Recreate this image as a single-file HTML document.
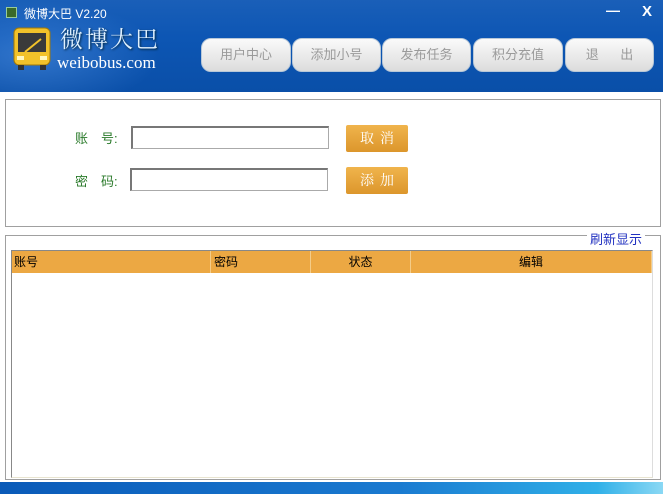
<!DOCTYPE html>
<html><head><meta charset="utf-8"><style>
*{margin:0;padding:0;box-sizing:border-box}
body{width:663px;height:494px;overflow:hidden;background:#fff;font-family:"Liberation Sans","Noto Sans CJK SC","WenQuanYi Zen Hei",sans-serif;position:relative}
.hdr{position:absolute;left:0;top:0;width:663px;height:92px;background:linear-gradient(180deg,#1a5fb8 0%,#0d56b4 40%,#0a4fa8 100%)}
.hdr:before{content:"";position:absolute;left:0;top:0;width:160px;height:92px;background:radial-gradient(ellipse at 20% 60%,rgba(120,180,255,.35),transparent 70%)}
.title{position:absolute;left:24px;top:5px;color:#fff;font-size:12px}
.ico{position:absolute;left:6px;top:7px;width:11px;height:11px;background:#3a6a2a;border:1px solid #9c9}
.logo{position:absolute;left:60px;top:23px;color:#dff0ff;font-family:"Noto Serif CJK SC",serif;font-size:23px;line-height:30px;letter-spacing:2px;text-shadow:1px 1px 2px #023}
.url{position:absolute;left:57px;top:53px;color:#fff;font-family:"Liberation Serif",serif;font-size:17px;line-height:20px}
.btn{position:absolute;top:38px;height:34px;border-radius:10px;background:linear-gradient(#fafafa,#dcdcdc);border:1px solid #b8c8d8;color:#9a9a9a;font-size:13px;text-align:center;line-height:32px}
.minx{position:absolute;top:0;color:#fff;font-weight:bold;font-size:14px}
.panel{position:absolute;left:5px;top:99px;width:656px;height:128px;border:1px solid #a0a0a0}
.lbl{position:absolute;color:#2a7a2a;font-size:13px}
.inp{position:absolute;width:198px;height:23px;border:1px solid #aaa;border-top:2px solid #777;border-left:2px solid #777;background:#fff}
.ob{position:absolute;width:62px;height:27px;background:linear-gradient(#f0b44c,#dc962c);border-radius:2px;color:#fff;font-family:"Noto Serif CJK SC",serif;font-size:14px;text-align:center;line-height:27px;letter-spacing:6px;padding-left:6px}
.grp{position:absolute;left:5px;top:235px;width:656px;height:245px;border:1px solid #a0a0a0}
.gl{position:absolute;left:587px;top:229px;background:#fff;color:#2030c0;font-size:13px;padding:0 3px}
.tbl{position:absolute;left:11px;top:250px;width:642px;height:228px;border:1px solid #888;border-right:1px solid #ddd;border-bottom:1px solid #e8e4d0}
.th{position:absolute;top:0;height:22px;background:#eca843;border-right:1px solid #f4cc88;font-size:12px;line-height:22px;color:#000}
.foot{position:absolute;left:0;top:482px;width:663px;height:12px;background:linear-gradient(90deg,#0a5ab8,#1a7ad0 60%,#30b0e8 90%,#8ad8f4)}
</style></head><body>
<div class="hdr">
<div class="ico"></div>
<div class="title">微博大巴 V2.20</div>
<svg style="position:absolute;left:13px;top:27px" width="38" height="44" viewBox="0 0 38 44"><rect x="1" y="1" width="36" height="37" rx="5" fill="#f2c22a" stroke="#a07808"/><rect x="5" y="6" width="28" height="19" fill="#3a3a3a"/><line x1="12" y1="25" x2="28" y2="12" stroke="#f2c22a" stroke-width="2"/><rect x="4" y="29" width="7" height="4" fill="#fff8c0"/><rect x="27" y="29" width="7" height="4" fill="#fff8c0"/><rect x="5" y="38" width="6" height="5" fill="#333"/><rect x="27" y="38" width="6" height="5" fill="#333"/></svg>
<div class="logo">微博大巴</div>
<div class="url">weibobus.com</div>
<div class="minx" style="left:606px;top:2px">—</div>
<div class="minx" style="left:642px;top:3px;font-family:'Liberation Sans';font-size:15px">X</div>
<div class="btn" style="left:201px;width:90px">用户中心</div>
<div class="btn" style="left:292px;width:89px">添加小号</div>
<div class="btn" style="left:382px;width:89px">发布任务</div>
<div class="btn" style="left:473px;width:90px">积分充值</div>
<div class="btn" style="left:565px;width:89px;word-spacing:18px">退 出</div>
</div>
<div class="panel"></div>
<div class="lbl" style="left:75px;top:128px">账　号:</div>
<div class="inp" style="left:131px;top:126px"></div>
<div class="ob" style="left:346px;top:125px">取消</div>
<div class="lbl" style="left:75px;top:171px">密　码:</div>
<div class="inp" style="left:130px;top:168px"></div>
<div class="ob" style="left:346px;top:167px">添加</div>
<div class="grp"></div>
<div class="gl">刷新显示</div>
<div class="tbl">
<div class="th" style="left:0;width:199px;padding-left:2px">账号</div>
<div class="th" style="left:199px;width:100px;padding-left:3px">密码</div>
<div class="th" style="left:299px;width:100px;text-align:center">状态</div>
<div class="th" style="left:399px;width:241px;text-align:center">编辑</div>
</div>
<div class="foot"></div>
</body></html>
